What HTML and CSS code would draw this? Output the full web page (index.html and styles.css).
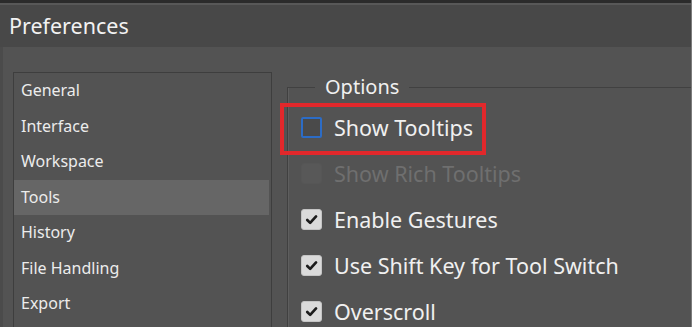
FILE: index.html
```html
<!DOCTYPE html>
<html>
<head>
    <title>Preferences</title>
    <link rel="stylesheet" href="styles.css">
</head>
<body>

    <div class="window">
        <div class="titlebar">Preferences</div>

        <div class="content">
            <ul class="nav">
                <li>General</li>
                <li>Interface</li>
                <li>Workspace</li>
                <li class="selected">Tools</li>
                <li>History</li>
                <li>File Handling</li>
                <li>Export</li>
            </ul>

            <div class="group">
                <span class="legend">Options</span>
                <div class="rows">
                    <div class="row">
                        <label class="option highlight">
                            <span class="box focused"></span>
                            Show Tooltips
                        </label>
                    </div>
                    <div class="row">
                        <label class="option disabled">
                            <span class="box"></span>
                            Show Rich Tooltips
                        </label>
                    </div>
                    <div class="row">
                        <label class="option">
                            <span class="box checked"><svg viewBox="0 0 20 20"><path d="M5.5 10.5 L8.6 13.6 L14.8 6.8"/></svg></span>
                            Enable Gestures
                        </label>
                    </div>
                    <div class="row">
                        <label class="option">
                            <span class="box checked"><svg viewBox="0 0 20 20"><path d="M5.5 10.5 L8.6 13.6 L14.8 6.8"/></svg></span>
                            Use Shift Key for Tool Switch
                        </label>
                    </div>
                    <div class="row">
                        <label class="option">
                            <span class="box checked"><svg viewBox="0 0 20 20"><path d="M5.5 10.5 L8.6 13.6 L14.8 6.8"/></svg></span>
                            Overscroll
                        </label>
                    </div>
                </div>
            </div>
        </div>
    </div>

</body>
</html>
```

FILE: styles.css
```css
body {
    margin: 0;
    background-color: #535353;
    font-family: "Noto Sans", "Open Sans", sans-serif;
    color: #efefef;
    overflow: hidden;
}

.window {
    width: 692px;
    height: 327px;
    box-sizing: border-box;
    border-right: 1px solid #7c7c7c;
    overflow: hidden;
}

.titlebar {
    height: 44px;
    border-top: 3px solid #2b2b2b;
    box-shadow: inset 0 2px 0 #585858;
    background-color: #484848;
    padding-left: 9px;
    font-size: 21.5px;
    line-height: 46px;
    color: #f2f2f2;
}

.content {
    display: flex;
    align-items: flex-start;
    gap: 15px;
    border-left: 3px solid #4b4b4b;
    padding-left: 10px;
    height: 280px;
}

/* liste des rubriques */
.nav {
    list-style: none;
    margin: 25px 0 0 0;
    padding: 0 2px 0 0;
    width: 255px;
    height: 260px;
    border: 1px solid #3e3e3e;
}

.nav li {
    height: 35.5px;
    line-height: 35.5px;
    padding-left: 7px;
    font-size: 16px;
    color: #ececec;
}

.nav li.selected {
    background-color: #666666;
}

/* groupe Options */
.group {
    flex: 1;
    margin-top: 40px;
    height: 300px;
    border-top: 1px solid #414141;
    border-left: 1px solid #404040;
    box-shadow: inset 1px 0 0 #5e5e5e;
    padding-left: 13px;
}

.legend {
    display: block;
    width: fit-content;
    margin: -14px 0 0 14px;
    padding: 0 10px;
    background-color: #535353;
    font-size: 20px;
    line-height: 26px;
    color: #f0f0f0;
}

.rows {
    margin-top: 4px;
}

.row {
    height: 46px;
    display: flex;
    align-items: center;
}

.option {
    position: relative;
    display: flex;
    align-items: center;
    gap: 12px;
    font-size: 21.5px;
    color: #f0f0f0;
}

.option.disabled {
    color: #6f6f6f;
}

.box {
    width: 21px;
    height: 21px;
    box-sizing: border-box;
    border-radius: 3px;
    background-color: #585858;
    border: 1px solid #565656;
    flex-shrink: 0;
}

.box.focused {
    background-color: #4a4a4a;
    border: 2px solid #2c6cc6;
    border-radius: 2px;
}

.box.checked {
    background-color: #dadada;
    border: 1px solid #c4c4c4;
}

.box svg {
    display: block;
    width: 19px;
    height: 19px;
}

.box svg path {
    fill: none;
    stroke: #1c1c1c;
    stroke-width: 2.8;
    stroke-linecap: round;
    stroke-linejoin: round;
}

/* cadre rouge d'annotation */
.highlight::after {
    content: "";
    position: absolute;
    top: -10px;
    bottom: -13px;
    left: -21px;
    right: -13px;
    border: 4px solid #e2282b;
}
```
